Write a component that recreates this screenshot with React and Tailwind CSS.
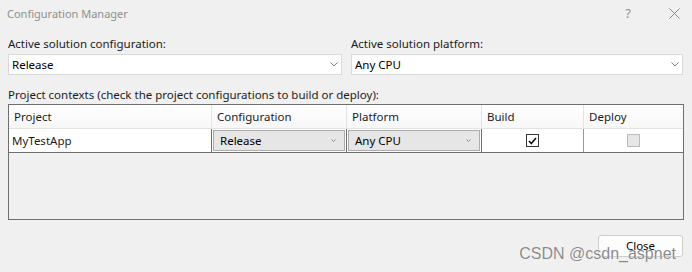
import React from "react";

const Chevron = ({ className = "" }) => (
  <svg width="8" height="5" viewBox="0 0 8 5" className={className}>
    <polyline points="0.5,0.5 4,4 7.5,0.5" fill="none" stroke="currentColor" strokeWidth="1" />
  </svg>
);

const Select = ({ value }) => (
  <div className="h-[21px] bg-white border border-[#d9d9d9] flex items-center justify-between pl-[3px] pr-[3px]">
    <span className="text-black">{value}</span>
    <Chevron className="text-[#7a7a7a]" />
  </div>
);

const CellSelect = ({ value }) => (
  <div className="h-[21px] bg-[#e6e6e6] border border-[#acacac] flex items-center justify-between pl-[6px] pr-[8px]">
    <span className="text-black">{value}</span>
    <svg width="5" height="3" viewBox="0 0 5 3" className="text-[#8a8a8a]">
      <polyline points="0.5,0.5 2.5,2.5 4.5,0.5" fill="none" stroke="currentColor" strokeWidth="1" />
    </svg>
  </div>
);

const App = () => {
  const headers = ["Project", "Configuration", "Platform", "Build", "Deploy"];

  return (
    <div
      className="w-[692px] h-[272px] bg-[#f0f0f0] relative overflow-hidden text-[11.5px] leading-none text-[#1b1b1b]"
      style={{ fontFamily: '"Noto Sans", "Liberation Sans", sans-serif' }}
    >
      {/* Title bar */}
      <div className="h-[26px] flex items-center justify-between pl-[7px]">
        <span className="text-[#8f8f8f] text-[11px]">Configuration Manager</span>
        <div className="flex items-center text-[#8f8f8f]">
          <span className="w-[56px] text-center text-[13px]">?</span>
          <span className="w-[36px] flex justify-center">
            <svg width="11" height="11" viewBox="0 0 11 11">
              <path d="M0.5 0.5 L10.5 10.5 M10.5 0.5 L0.5 10.5" stroke="#8a8a8a" strokeWidth="1" />
            </svg>
          </span>
        </div>
      </div>

      {/* Solution configuration / platform */}
      <div className="grid grid-cols-[334px_332px] gap-x-[9px] pl-[8px] pt-[8px]">
        <div>
          <div className="h-[20px] flex items-center">Active solution configuration:</div>
          <Select value="Release" />
        </div>
        <div>
          <div className="h-[20px] flex items-center">Active solution platform:</div>
          <Select value="Any CPU" />
        </div>
      </div>

      {/* Project contexts */}
      <div className="pl-[8px] pr-[8px] mt-[10px]">
        <div className="h-[19px] flex items-center">
          Project contexts (check the project configurations to build or deploy):
        </div>
        <div className="h-[116px] border border-[#6e6e6e] bg-[#f0f0f0]">
          <div className="grid grid-cols-[203px_135px_135px_102px_1fr] h-[24px] bg-white border-b border-[#e3e3e3]">
            {headers.map((h, i) => (
              <div
                key={h}
                className={`flex items-center pl-[5px] bg-gradient-to-b from-white to-[#f7f7f7] ${
                  i < 4 ? "border-r border-[#e3e3e3]" : ""
                }`}
              >
                {h}
              </div>
            ))}
          </div>
          <div className="grid grid-cols-[203px_135px_135px_102px_1fr] h-[24px] bg-white border-b border-[#6e6e6e]">
            <div className="flex items-center pl-[3px] border-r border-[#6e6e6e]">MyTestApp</div>
            <div className="border-r border-[#6e6e6e] pt-[1px] px-[1px]">
              <CellSelect value="Release" />
            </div>
            <div className="border-r border-[#6e6e6e] pt-[1px] px-[1px]">
              <CellSelect value="Any CPU" />
            </div>
            <div className="flex items-center justify-center border-r border-[#9a9a9a]">
              <div className="w-[13px] h-[13px] border border-[#333] bg-white flex items-center justify-center">
                <svg width="9" height="8" viewBox="0 0 9 8">
                  <polyline points="1,4 3.3,6.5 8,1" fill="none" stroke="#111" strokeWidth="1.6" />
                </svg>
              </div>
            </div>
            <div className="flex items-center justify-center">
              <div className="w-[13px] h-[13px] border border-[#bcbcbc] bg-[#e6e6e6]" />
            </div>
          </div>
        </div>
      </div>

      {/* Footer */}
      <div className="flex justify-end pr-[9px] mt-[15px]">
        <button className="w-[85px] h-[22px] rounded-[3px] border border-[#cccccc] bg-[#fdfdfd] text-black">
          Close
        </button>
      </div>

      {/* Watermark */}
      <div
        className="absolute right-[16px] top-[246px] text-[16px] text-[#8a8a8a] leading-none pointer-events-none"
        style={{ fontFamily: '"Liberation Sans", Arial, sans-serif', textShadow: "0 0 1px #fff, 0 0 1px #fff" }}
      >
        CSDN @csdn_aspnet
      </div>
    </div>
  );
};

export default App;
